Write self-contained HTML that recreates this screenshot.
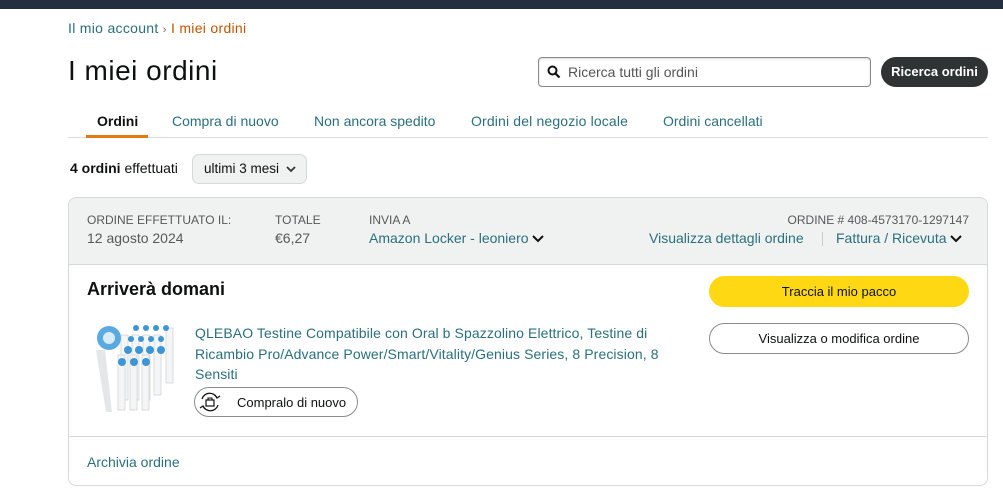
<!DOCTYPE html><html><head><style>
*{box-sizing:border-box;margin:0;padding:0}
body{width:1003px;height:493px;background:#fff;font-family:"Liberation Sans",Arial,sans-serif;color:#0f1111;font-size:14px;position:relative;overflow:hidden}
.a{position:absolute;white-space:nowrap}
.l{color:#2a6f7d}
</style></head><body>
<div class="a" style="left:0;top:0;width:1003px;height:9px;background:#232f3e"></div>
<div class="a" style="left:68px;top:20px;font-size:14px;letter-spacing:.3px"><span class="l">Il mio account</span> <span style="color:#666;font-size:11px">›</span> <span style="color:#c45500">I miei ordini</span></div>
<div class="a" style="left:68px;top:55px;font-size:28px;letter-spacing:.5px">I miei ordini</div>
<div class="a" style="left:538px;top:57px;width:333px;height:30px;border:1px solid #888;border-radius:4px;box-shadow:0 1px 2px rgba(0,0,0,.15) inset"></div>
<svg class="a" style="left:547px;top:65px" width="14" height="14" viewBox="0 0 14 14"><circle cx="5.5" cy="5.5" r="4" fill="none" stroke="#111" stroke-width="2"/><path d="M8.5 8.5L12.5 12.5" stroke="#111" stroke-width="2.2"/></svg>
<div class="a" style="left:568px;top:64px;color:#555">Ricerca tutti gli ordini</div>
<div class="a" style="left:881px;top:57px;width:107px;height:30px;background:#303333;border-radius:15px;color:#fff;font-weight:bold;font-size:13px;text-align:center;line-height:30px">Ricerca ordini</div>
<div class="a" style="left:68px;top:137px;width:920px;height:1px;background:#ddd"></div>
<div class="a" style="left:86px;top:135px;width:62px;height:3px;background:#e47911"></div>
<div class="a" style="left:97px;top:113px;font-weight:bold">Ordini</div>
<div class="a l" style="left:172px;top:113px">Compra di nuovo</div>
<div class="a l" style="left:314px;top:113px">Non ancora spedito</div>
<div class="a l" style="left:471px;top:113px;letter-spacing:.15px">Ordini del negozio locale</div>
<div class="a l" style="left:663px;top:113px">Ordini cancellati</div>
<div class="a" style="left:70px;top:160px"><b>4 ordini</b> effettuati</div>
<div class="a" style="left:192px;top:154px;width:115px;height:30px;background:#f0f2f2;border:1px solid #d5d9d9;border-radius:7px;line-height:28px;padding-left:11px;font-size:13.5px">ultimi 3 mesi <svg width="10" height="7" viewBox="0 0 10 7" style="margin-left:3px"><path d="M1 1l4 4 4-4" stroke="#333" stroke-width="1.8" fill="none"/></svg></div>
<div class="a" style="left:68px;top:197px;width:920px;height:289px;border:1px solid #d5d9d9;border-radius:8px;overflow:hidden">
<div style="height:67px;background:#f0f2f2;border-bottom:1px solid #d5d9d9"></div></div>
<div class="a" style="left:87px;top:213px;font-size:12px;color:#565959">ORDINE EFFETTUATO IL:</div>
<div class="a" style="left:87px;top:230px;color:#565959">12 agosto 2024</div>
<div class="a" style="left:275px;top:213px;font-size:12px;color:#565959">TOTALE</div>
<div class="a" style="left:275px;top:230px;color:#565959">€6,27</div>
<div class="a" style="left:369px;top:213px;font-size:12px;color:#565959">INVIA A</div>
<div class="a l" style="left:369px;top:230px">Amazon Locker - leoniero <svg width="12" height="8" viewBox="0 0 12 8"><path d="M1 1l5 5 5-5" stroke="#111" stroke-width="2" fill="none"/></svg></div>
<div class="a" style="right:34px;top:213px;font-size:12px;color:#565959">ORDINE # 408-4573170-1297147</div>
<div class="a l" style="left:649px;top:230px">Visualizza dettagli ordine</div>
<div class="a" style="left:822px;top:232px;width:1px;height:14px;background:#ccc"></div>
<div class="a l" style="left:836px;top:230px">Fattura / Ricevuta <svg width="12" height="8" viewBox="0 0 12 8"><path d="M1 1l5 5 5-5" stroke="#111" stroke-width="2" fill="none"/></svg></div>
<div class="a" style="left:87px;top:279px;font-size:18px;font-weight:bold">Arriverà domani</div>
<div class="a" style="left:709px;top:276px;width:260px;height:31px;background:#ffd814;border-radius:16px;text-align:center;line-height:31px;font-size:13px">Traccia il mio pacco</div>
<div class="a" style="left:709px;top:323px;width:260px;height:31px;border:1px solid #888c8c;border-radius:16px;text-align:center;line-height:29px;font-size:13px">Visualizza o modifica ordine</div>
<svg class="a" style="left:88px;top:320px" width="95" height="95" viewBox="0 0 95 95">
<path d="M8 30 L18 92 L24 92 L17 30Z" fill="#e4e6e8"/>
<g fill="#f4f5f6" stroke="#c8c8c8" stroke-width=".6"><rect x="33" y="15" width="7" height="65"/><rect x="44" y="15" width="7" height="65"/><rect x="55" y="15" width="7" height="65"/><rect x="66" y="15" width="7" height="60"/><rect x="78" y="8" width="7" height="55"/><rect x="30" y="35" width="7" height="55"/><rect x="42" y="35" width="7" height="55"/><rect x="54" y="35" width="7" height="55"/></g>
<circle cx="21" cy="18" r="12" fill="#5aa9e0"/><circle cx="21" cy="18" r="6" fill="#d8ecf8"/>
<g fill="#3c95d5"><circle cx="48" cy="8" r="3"/><circle cx="58" cy="8" r="3"/><circle cx="68" cy="8" r="3"/><circle cx="78" cy="8" r="3"/><circle cx="43" cy="19" r="3"/><circle cx="53" cy="19" r="3"/><circle cx="63" cy="19" r="3"/><circle cx="73" cy="19" r="3"/><circle cx="40" cy="30" r="4"/><circle cx="51" cy="30" r="4"/><circle cx="62" cy="30" r="4"/><circle cx="73" cy="30" r="4"/><circle cx="34" cy="42" r="4"/><circle cx="46" cy="42" r="4"/><circle cx="58" cy="42" r="4"/></g></svg>
<div class="a l" style="left:195px;top:323px;line-height:20.5px;white-space:normal;width:480px;letter-spacing:.1px">QLEBAO Testine Compatibile con Oral b Spazzolino Elettrico, Testine di Ricambio Pro/Advance Power/Smart/Vitality/Genius Series, 8 Precision, 8 Sensiti</div>
<div class="a" style="left:194px;top:387px;width:164px;height:30px;border:1px solid #888c8c;border-radius:15px"></div>
<svg class="a" style="left:198px;top:391px" width="24" height="22" viewBox="0 0 24 22"><path d="M4 8a8 8 0 0 1 15-1M20 14a8 8 0 0 1-15 1" fill="none" stroke="#111" stroke-width="1.3"/><path d="M17 4l2 3 3-2M7 18l-2-3-3 2" fill="none" stroke="#111" stroke-width="1.3"/><rect x="8" y="9" width="8" height="6" fill="none" stroke="#111" stroke-width="1.2"/><path d="M10 9V7h4v2" fill="none" stroke="#111" stroke-width="1.1"/></svg>
<div class="a" style="left:237px;top:395px;font-size:13px">Compralo di nuovo</div>
<div class="a" style="left:69px;top:436px;width:918px;height:1px;background:#d5d9d9"></div>
<div class="a l" style="left:87px;top:454px">Archivia ordine</div>
</body></html>
